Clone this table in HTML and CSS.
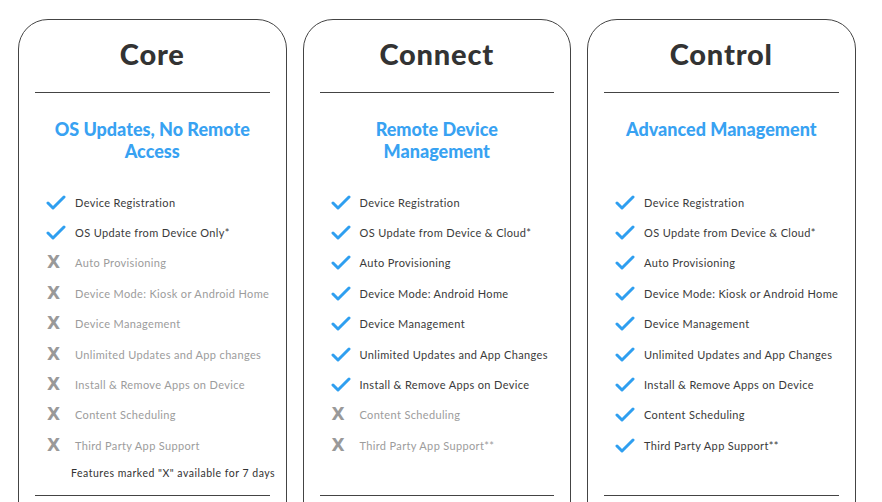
FILE: index.html
```html
<!DOCTYPE html>
<html>
<head>
<meta charset="utf-8">
<link rel="stylesheet" href="styles.css">
</head>
<body>
<svg width="0" height="0" class="defs">
  <defs>
    <symbol id="chk" viewBox="0 0 20 15">
      <path d="M2 8 L7 13 L18 2" fill="none" stroke="currentColor" stroke-width="3" stroke-linecap="round" stroke-linejoin="round"/>
    </symbol>
  </defs>
</svg>
<div class="plans">
  <div class="card">
    <h2 class="title">Core</h2>
    <div class="sub">OS Updates, No Remote Access</div>
    <ul class="list">
      <li class="on"><svg class="ic"><use href="#chk"/></svg><span>Device Registration</span></li>
      <li class="on"><svg class="ic"><use href="#chk"/></svg><span>OS Update from Device Only*</span></li>
      <li class="off"><b class="x">X</b><span>Auto Provisioning</span></li>
      <li class="off"><b class="x">X</b><span>Device Mode: Kiosk or Android Home</span></li>
      <li class="off"><b class="x">X</b><span>Device Management</span></li>
      <li class="off"><b class="x">X</b><span>Unlimited Updates and App changes</span></li>
      <li class="off"><b class="x">X</b><span>Install &amp; Remove Apps on Device</span></li>
      <li class="off"><b class="x">X</b><span>Content Scheduling</span></li>
      <li class="off"><b class="x">X</b><span>Third Party App Support</span></li>
    </ul>
    <div class="note">Features marked "X" available for 7 days</div>
  </div>
  <div class="card">
    <h2 class="title">Connect</h2>
    <div class="sub">Remote Device Management</div>
    <ul class="list">
      <li class="on"><svg class="ic"><use href="#chk"/></svg><span>Device Registration</span></li>
      <li class="on"><svg class="ic"><use href="#chk"/></svg><span>OS Update from Device &amp; Cloud*</span></li>
      <li class="on"><svg class="ic"><use href="#chk"/></svg><span>Auto Provisioning</span></li>
      <li class="on"><svg class="ic"><use href="#chk"/></svg><span>Device Mode: Android Home</span></li>
      <li class="on"><svg class="ic"><use href="#chk"/></svg><span>Device Management</span></li>
      <li class="on"><svg class="ic"><use href="#chk"/></svg><span>Unlimited Updates and App Changes</span></li>
      <li class="on"><svg class="ic"><use href="#chk"/></svg><span>Install &amp; Remove Apps on Device</span></li>
      <li class="off"><b class="x">X</b><span>Content Scheduling</span></li>
      <li class="off"><b class="x">X</b><span>Third Party App Support**</span></li>
    </ul>
    <div class="note"></div>
  </div>
  <div class="card">
    <h2 class="title">Control</h2>
    <div class="sub">Advanced Management</div>
    <ul class="list">
      <li class="on"><svg class="ic"><use href="#chk"/></svg><span>Device Registration</span></li>
      <li class="on"><svg class="ic"><use href="#chk"/></svg><span>OS Update from Device &amp; Cloud*</span></li>
      <li class="on"><svg class="ic"><use href="#chk"/></svg><span>Auto Provisioning</span></li>
      <li class="on"><svg class="ic"><use href="#chk"/></svg><span>Device Mode: Kiosk or Android Home</span></li>
      <li class="on"><svg class="ic"><use href="#chk"/></svg><span>Device Management</span></li>
      <li class="on"><svg class="ic"><use href="#chk"/></svg><span>Unlimited Updates and App Changes</span></li>
      <li class="on"><svg class="ic"><use href="#chk"/></svg><span>Install &amp; Remove Apps on Device</span></li>
      <li class="on"><svg class="ic"><use href="#chk"/></svg><span>Content Scheduling</span></li>
      <li class="on"><svg class="ic"><use href="#chk"/></svg><span>Third Party App Support**</span></li>
    </ul>
    <div class="note"></div>
  </div>
</div>
</body>
</html>
```
FILE: styles.css
```css
html, body {
  margin: 0;
  padding: 0;
  background: #fff;
  overflow: hidden;
}
body {
  font-family: Lato, "Open Sans", sans-serif;
  color: #333;
}
.defs {
  position: absolute;
}
.plans {
  display: flex;
  gap: 16px;
  padding: 19px 0 0 18px;
}
.card {
  width: 268.5px;
  flex: none;
  box-sizing: border-box;
  border: 1px solid #444;
  border-radius: 30px;
  padding: 0 16px;
  height: 560px;
}
.title {
  margin: 0;
  height: 72px;
  line-height: 68px;
  text-align: center;
  font-size: 29px;
  font-weight: 900;
  letter-spacing: 0.8px;
  color: #333;
  border-bottom: 1px solid #444;
}
.sub {
  margin: 25px 0 0;
  height: 44px;
  padding: 0 4px;
  text-align: center;
  font-size: 18px;
  line-height: 22px;
  font-weight: 900;
  color: #38a2f2;
}
.list {
  list-style: none;
  margin: 25px 0 0;
  padding: 0 0 0 11px;
}
.list li {
  display: flex;
  align-items: center;
  height: 30.4px;
  font-size: 11px;
  letter-spacing: 0.35px;
  white-space: nowrap;
}
.list li.on { color: #3a3a3a; }
.list li.off { color: #9c9c9c; }
.ic {
  width: 20px;
  height: 15px;
  color: #2f9ff0;
  margin-right: 9px;
  flex: none;
}
.x {
  width: 20px;
  margin-right: 9px;
  flex: none;
  font-family: "DejaVu Sans", "Liberation Sans", sans-serif;
  font-weight: 700;
  font-size: 17px;
  line-height: 17px;
  color: #999;
  padding-left: 1px;
  box-sizing: border-box;
}
.note {
  height: 35px;
  box-sizing: border-box;
  padding: 5px 0 0 36px;
  font-size: 10.5px;
  letter-spacing: 0.5px;
  line-height: 14px;
  color: #333;
  border-bottom: 1px solid #444;
  white-space: nowrap;
}
```
